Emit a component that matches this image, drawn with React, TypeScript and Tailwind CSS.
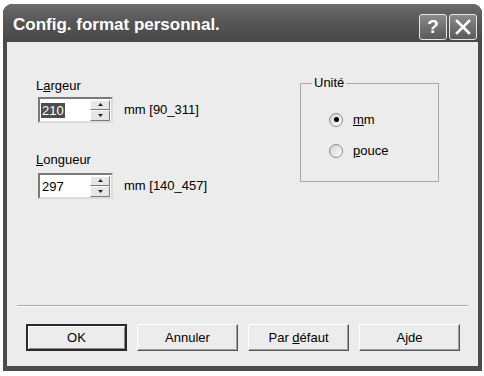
import React from "react";

const font = { fontFamily: '"Liberation Sans", Arial, sans-serif' };

function Spinner() {
  return (
    <div className="flex flex-col w-[20px] h-[21px] gap-0">
      {[0, 1].map((i) => (
        <div
          key={i}
          className="flex-1 flex items-center justify-center bg-[#e6e6e6] border border-t-white border-l-white border-r-[#7a7a7a] border-b-[#7a7a7a]"
        >
          <svg width="5" height="3" viewBox="0 0 5 3">
            {i === 0 ? <path d="M0 3 L2.5 0 L5 3 Z" fill="#222" /> : <path d="M0 0 L2.5 3 L5 0 Z" fill="#222" />}
          </svg>
        </div>
      ))}
    </div>
  );
}

function SpinInput({ value, selected }: { value: string; selected?: boolean }) {
  return (
    <div className="w-[75px] h-[26px] bg-white border-2 border-t-[#7a7a7a] border-l-[#7a7a7a] border-r-[#dcdcdc] border-b-[#dcdcdc] flex items-center justify-between pl-[1px] pr-[1px]">
      <span
        className={
          "text-[13px] leading-[15px] px-[1px] " + (selected ? "bg-[#4d4d4d] text-white" : "text-black")
        }
      >
        {value}
      </span>
      <Spinner />
    </div>
  );
}

function Radio({ checked }: { checked?: boolean }) {
  return (
    <div className="w-[14px] h-[14px] rounded-full border border-[#8a8a8a] bg-gradient-to-br from-[#d0d0d0] to-white flex items-center justify-center">
      {checked && <div className="w-[5px] h-[5px] rounded-full bg-black" />}
    </div>
  );
}

function Btn({ children, def }: { children: React.ReactNode; def?: boolean }) {
  return (
    <div
      className={
        "w-[101px] h-[27px] flex items-center justify-center text-[13px] text-black bg-[#ececec] " +
        (def
          ? "border-2 border-[#2a2a2a] shadow-[inset_1px_1px_0_#fff,inset_-1px_-1px_0_#888]"
          : "border border-t-white border-l-white border-r-[#555] border-b-[#555] shadow-[inset_-1px_-1px_0_#a0a0a0]")
      }
    >
      {children}
    </div>
  );
}

export default function App() {
  return (
    <div className="w-[484px] h-[376px] bg-white pt-[4px] pl-[3px]" style={font}>
      <div className="w-[479px] h-[367px] rounded-t-[9px] bg-[#4b4b4b] flex flex-col overflow-hidden">
        <div className="h-[38px] flex items-center justify-between pl-[10px] pr-[5px] bg-gradient-to-b from-[#6c6c6c] via-[#555] to-[#484848]">
          <span className="text-white font-bold text-[17px] mt-[4px]">Config. format personnal.</span>
          <div className="flex gap-[2px] mt-[8px]">
            <div className="w-[28px] h-[26px] rounded-[3px] border border-[#e6e6e6] bg-gradient-to-b from-[#8a8a8a] to-[#5a5a5a] flex items-center justify-center text-white font-bold text-[19px]">
              ?
            </div>
            <div className="w-[28px] h-[26px] rounded-[3px] border border-[#e6e6e6] bg-gradient-to-b from-[#8a8a8a] to-[#5a5a5a] flex items-center justify-center">
              <svg width="16" height="16" viewBox="0 0 16 16">
                <path d="M2 2 L14 14 M14 2 L2 14" stroke="white" strokeWidth="2.6" strokeLinecap="square" />
              </svg>
            </div>
          </div>
        </div>
        <div className="flex-1 mx-[4px] mb-[5px] bg-[#ececec] flex flex-col text-black text-[13px]">
          <div className="flex pt-[36px]">
            <div className="flex flex-col pl-[28px] w-[293px]">
              <div className="leading-[15px] pl-[1px]">
                L<span className="underline">a</span>rgeur
              </div>
              <div className="flex items-center mt-[4px] pl-[3px]">
                <SpinInput value="210" selected />
                <span className="ml-[11px]">mm [90_311]</span>
              </div>
              <div className="leading-[15px] pl-[1px] mt-[29px]">
                <span className="underline">L</span>ongueur
              </div>
              <div className="flex items-center mt-[6px] pl-[3px]">
                <SpinInput value="297" />
                <span className="ml-[11px]">mm [140_457]</span>
              </div>
            </div>
            <div className="relative mt-[5px] w-[139px] h-[99px] border border-[#a8a8a8] pl-[28px] pt-[28px]">
              <span className="absolute -top-[9px] left-[11px] px-[2px] bg-[#ececec] leading-[15px]">Unité</span>
              <div className="flex items-center gap-[10px] h-[15px]">
                <Radio checked />
                <span>
                  <span className="underline">m</span>m
                </span>
              </div>
              <div className="flex items-center gap-[10px] h-[15px] mt-[16px]">
                <Radio />
                <span>
                  <span className="underline">p</span>ouce
                </span>
              </div>
            </div>
          </div>
          <div className="flex-1" />
          <div className="mx-[10px] h-[2px] border-t border-[#a8a8a8] border-b border-b-white" />
          <div className="flex gap-[10px] pl-[19px] pt-[17px] pb-[15px]">
            <Btn def>OK</Btn>
            <Btn>Annuler</Btn>
            <Btn>
              Par&nbsp;<span className="underline">d</span>éfaut
            </Btn>
            <Btn>
              A<span className="underline">j</span>de
            </Btn>
          </div>
        </div>
      </div>
    </div>
  );
}
